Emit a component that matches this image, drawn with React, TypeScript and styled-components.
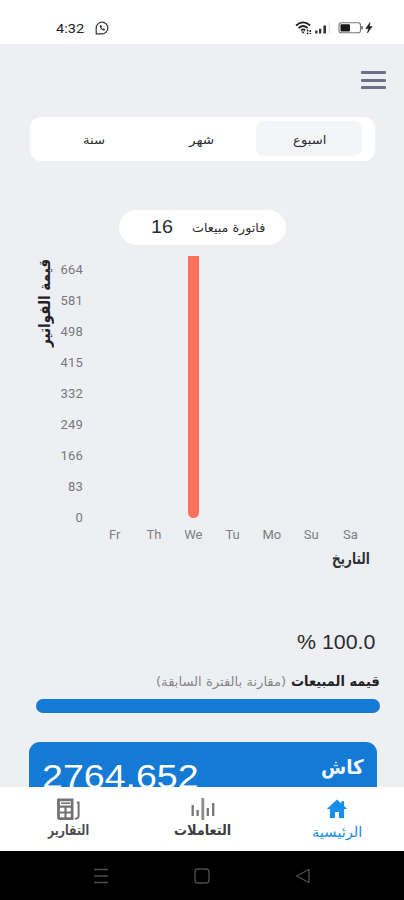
import React, { useLayoutEffect, useRef, useState } from 'react';
import styled, { createGlobalStyle } from 'styled-components';

const GlobalStyle = createGlobalStyle`
  * { box-sizing: border-box; }
  body { margin: 0; background: #edeff3; font-family: Roboto, 'DejaVu Sans', sans-serif; }
`;

const Screen = styled.div`
  width: 404px;
  height: 900px;
  display: flex;
  flex-direction: column;
  background: #edeff3;
  overflow: hidden;
`;

/* Text that is stretched to fill an exact width */
const FitBox = styled.span<{ $w: number; $lh: number }>`
  display: block;
  flex: none;
  direction: ltr;
  text-align: left;
  width: ${(p) => p.$w}px;
  height: ${(p) => p.$lh}px;
  line-height: ${(p) => p.$lh}px;
`;
const FitInner = styled.span<{ $size: number; $color: string; $weight: number; $font: string }>`
  display: inline-block;
  white-space: pre;
  transform-origin: 0 50%;
  font-family: ${(p) => p.$font};
  font-size: ${(p) => p.$size}px;
  font-weight: ${(p) => p.$weight};
  color: ${(p) => p.$color};
`;

type FitProps = {
  children: string;
  width: number;
  size: number;
  color?: string;
  weight?: number;
  font?: string;
  line?: number;
  dir?: 'rtl' | 'ltr';
};

function Fit({
  children,
  width,
  size,
  color = '#2b2b2f',
  weight = 400,
  font = "'DejaVu Sans', sans-serif",
  line = 20,
  dir = 'rtl',
}: FitProps) {
  const ref = useRef<HTMLSpanElement>(null);
  const [scale, setScale] = useState(1);
  useLayoutEffect(() => {
    if (ref.current) setScale(width / ref.current.offsetWidth);
  }, [width, children]);
  return (
    <FitBox $w={width} $lh={line}>
      <FitInner
        ref={ref}
        dir={dir}
        $size={size}
        $color={color}
        $weight={weight}
        $font={font}
        style={{ transform: `scaleX(${scale})` }}
      >
        {children}
      </FitInner>
    </FitBox>
  );
}

const LATIN = "'Liberation Sans', Arial, sans-serif";

const StatusBar = styled.header`
  height: 44px;
  flex: none;
  background: #fff;
  display: flex;
  justify-content: space-between;
  padding: 18px 30px 0 56px;
`;
const StatusGroup = styled.div<{ $gap: number }>`
  display: flex;
  height: 20px;
  align-items: center;
  gap: ${(p) => p.$gap}px;
`;

const Content = styled.main`
  height: 743px;
  flex: none;
  overflow: hidden;
  display: flex;
  flex-direction: column;
`;
const MenuButton = styled.button`
  align-self: flex-end;
  flex: none;
  margin: 27px 18px 0 0;
  width: 25px;
  height: 18px;
  padding: 0;
  border: 0;
  background: none;
  display: flex;
  flex-direction: column;
  justify-content: space-between;
`;
const MenuLine = styled.span`
  height: 3px;
  border-radius: 1px;
  background: #6b7189;
`;

const Segments = styled.div`
  flex: none;
  margin: 28px 29px 0 30px;
  height: 44px;
  padding: 4px 13px 5px 10px;
  border-radius: 11px;
  background: #fff;
  display: grid;
  grid-template-columns: 107px 109px 106px;
`;
const Segment = styled.div<{ $active?: boolean }>`
  display: flex;
  align-items: center;
  justify-content: center;
  border-radius: 8px;
  background: ${(p) => (p.$active ? '#f4f5f7' : 'transparent')};
`;

const InvoicePill = styled.div`
  flex: none;
  margin: 49px 0 0 119px;
  width: 167px;
  height: 35px;
  border-radius: 18px;
  background: #fff;
  display: flex;
  align-items: center;
  padding: 0 0 2px 32px;
  gap: 19px;
`;

const Chart = styled.section`
  flex: none;
  margin-top: 11px;
  height: 289px;
  display: grid;
  grid-template-columns: 35px 48px 12px 275px;
  grid-template-rows: 262px 27px;
`;
const AxisTitle = styled.div`
  display: flex;
  align-items: flex-start;
  justify-content: flex-end;
`;
const Turned = styled.div`
  width: 20px;
  height: 88px;
  margin: 3px -20px 0 0;
  display: flex;
  align-items: center;
  justify-content: center;
  flex: none;
  & > span { transform: rotate(-90deg); }
`;
const Ticks = styled.div`
  display: flex;
  flex-direction: column;
  text-align: right;
  font-size: 13px;
  letter-spacing: 0.2px;
  color: #77797e;
`;
const Tick = styled.div`
  height: 31px;
  line-height: 27px;
  flex: none;
`;
const Plot = styled.div`
  grid-column: 4;
  display: grid;
  grid-template-columns: repeat(7, 39.3px);
`;
const Slot = styled.div`
  display: flex;
  align-items: flex-end;
  justify-content: center;
`;
const Bar = styled.div`
  width: 11px;
  height: 100%;
  border-radius: 0 0 6px 6px;
  background: #ff6f5b;
`;
const Day = styled.div`
  text-align: center;
  font-size: 13px;
  line-height: 34px;
  color: #7d7f84;
`;
const DateTitle = styled.div`
  flex: none;
  height: 24px;
  margin: 2px 34px 0 0;
  display: flex;
  align-items: center;
  justify-content: flex-end;
`;

const Percent = styled.div`
  flex: none;
  margin: 58px 29px 0 0;
  height: 26px;
  display: flex;
  justify-content: flex-end;
`;
const Comparison = styled.div`
  flex: none;
  margin: 14px 24px 0 0;
  height: 24px;
  display: flex;
  justify-content: flex-end;
  gap: 5px;
`;
const Progress = styled.div`
  flex: none;
  margin: 6px 24px 0 36px;
  height: 14px;
  border-radius: 7px;
  background: #1579d6;
`;
const CashCard = styled.section`
  flex: none;
  margin: 29px 27px 0 29px;
  height: 110px;
  border-radius: 11px;
  background: #1579d6;
  display: flex;
  justify-content: space-between;
  padding: 10px 13px 0 13px;
`;
const CashAmount = styled.div`
  padding-top: 6px;
`;

const TabBar = styled.nav`
  height: 64px;
  flex: none;
  background: #fff;
  display: grid;
  grid-template-columns: 136px 133px 135px;
`;
const Tab = styled.div<{ $drop?: number }>`
  display: flex;
  flex-direction: column;
  align-items: center;
  padding-top: 11px;
  gap: ${(p) => p.$drop ?? 0}px;
  & > svg { flex: none; }
`;
const SystemBar = styled.footer`
  height: 49px;
  flex: none;
  background: #000;
  display: grid;
  grid-template-columns: repeat(3, 101px);
  justify-content: center;
  justify-items: center;
  align-items: center;
`;

const WhatsApp = () => (
  <svg width="14" height="14" viewBox="0 0 14 14" fill="none" stroke="#333" strokeWidth="1.2">
    <path d="M1.2 12.8V6.9a5.8 5.8 0 1 1 5.8 5.9H1.2Z" />
    <path d="M4.7 4.2c-.5 2.5 2.2 5.4 4.9 5.3l.5-1.3-1.6-.8-.7.6-1.5-1.6.6-.7-.7-1.5Z" fill="#333" stroke="none" />
  </svg>
);
const Wifi = () => (
  <svg width="20" height="14" viewBox="0 0 20 14" fill="none" stroke="#222" strokeWidth="1.7">
    <path d="M1 4.5Q8.2-1.6 15.2 4.5M3.6 7Q8.2 3 12.6 7M6 9.3Q8.2 7.6 10.2 9.3" />
    <path d="m6.3 10.6 1.8 2.2 1.8-2.2Z" fill="#333" stroke="none" />
    <path d="M12.6 8.6v4.6M15.3 9v4" strokeWidth="1.5" strokeDasharray="2 1" />
  </svg>
);
const Signal = () => (
  <svg width="16" height="14" viewBox="0 0 16 14">
    <path d="M.2 9.5h2.3V12.4H.2zM4 7.8h2.3v4.6H4zM8.4 4.4h2.6v8H8.4z" fill="#333" />
    <path d="M13.7 1.5h1V12h-1z" fill="#ddd" />
  </svg>
);
const Battery = () => (
  <svg width="36" height="14" viewBox="0 0 36 14">
    <rect x="1" y="1.8" width="21.5" height="10" rx="2.4" fill="none" stroke="#777" strokeWidth="1.1" />
    <rect x="2.5" y="3.2" width="9.5" height="7.3" rx="1" fill="#181818" />
    <path d="M24 5v3.6" stroke="#666" strokeWidth="1.5" />
    <path d="M32 1.5 27.8 7.6h2.7L29.5 12l4.6-6.5h-2.8Z" fill="#222" stroke="#222" strokeWidth=".6" />
  </svg>
);
const Report = () => (
  <svg width="23" height="22" viewBox="0 0 23 22" fill="none" stroke="#737373">
    <path d="M1.5 1.8h13.6v18.8H3.2q-1.7 0-1.7-1.7Z" strokeWidth="2.8" />
    <path d="M1.5 8.6h13M8.5 8.6v12M2.5 14.5H14" strokeWidth="2.2" />
    <path d="M4 5.2h9" strokeWidth="1.6" />
    <path d="M19.8 4.4h1.8v13.4q0 3-3.8 3" strokeWidth="2" />
  </svg>
);
const Waves = () => (
  <svg width="24" height="22" viewBox="0 0 24 22" fill="none" stroke="#777" strokeWidth="2.3">
    <path d="M1.7 7v11M6.6 12v6M16.8 10v8M22.2 5v13" />
    <path d="M11.8 0v22" stroke="#8b8b8b" strokeWidth="2.8" />
  </svg>
);
const House = () => (
  <svg width="22" height="22" viewBox="0 0 22 22" fill="#168eea">
    <path d="M11 1.4.8 11.1h3.1V20h5.2v-6.1h3.8V20h5.2v-8.9h3.1L18 8V3.2h-2.8v2.2Z" />
  </svg>
);

const TICKS = ['664', '581', '498', '415', '332', '249', '166', '83', '0'];
const DAYS = ['Fr', 'Th', 'We', 'Tu', 'Mo', 'Su', 'Sa'];

export default function App() {
  return (
    <Screen>
      <GlobalStyle />
      <StatusBar>
        <StatusGroup $gap={11}>
          <Fit width={28} size={13} dir="ltr" font="Roboto, sans-serif" color="#222">4:32</Fit>
          <WhatsApp />
        </StatusGroup>
        <StatusGroup $gap={7}>
          <StatusGroup $gap={0}>
            <Wifi />
            <Signal />
          </StatusGroup>
          <Battery />
        </StatusGroup>
      </StatusBar>

      <Content>
        <MenuButton aria-label="menu">
          <MenuLine />
          <MenuLine />
          <MenuLine />
        </MenuButton>

        <Segments>
          <Segment><Fit width={22} size={12}>سنة</Fit></Segment>
          <Segment><Fit width={25} size={12}>شهر</Fit></Segment>
          <Segment $active><Fit width={33} size={12}>اسبوع</Fit></Segment>
        </Segments>

        <InvoicePill>
          <Fit width={22} size={18} dir="ltr" font={LATIN}>16</Fit>
          <Fit width={73} size={12}>فاتورة مبيعات</Fit>
        </InvoicePill>

        <Chart>
          <AxisTitle>
            <Turned>
              <Fit width={88} size={16} weight={700} color="#222228">قيمة الفواتير</Fit>
            </Turned>
          </AxisTitle>
          <Ticks>
            {TICKS.map((t) => <Tick key={t}>{t}</Tick>)}
          </Ticks>
          <Plot>
            {DAYS.map((d) => <Slot key={d}>{d === 'We' && <Bar />}</Slot>)}
          </Plot>
          <Plot>
            {DAYS.map((d) => <Day key={d}>{d}</Day>)}
          </Plot>
        </Chart>
        <DateTitle>
          <Fit width={38} size={16} weight={700} color="#303036">التاريخ</Fit>
        </DateTitle>

        <Percent>
          <Fit width={78} size={20} line={26} dir="ltr" font={LATIN}>% 100.0</Fit>
        </Percent>
        <Comparison>
          <Fit width={130} size={12.5} line={24} color="#85878c">(مقارنة بالفترة السابقة)</Fit>
          <Fit width={89} size={14} line={24} weight={700} color="#222228">قيمه المبيعات</Fit>
        </Comparison>
        <Progress />

        <CashCard>
          <CashAmount>
            <Fit width={157} size={33} line={38} dir="ltr" font={LATIN} color="#fff">2764.652</Fit>
          </CashAmount>
          <Fit width={43} size={20} line={30} weight={700} color="#f2f8ff">كاش</Fit>
        </CashCard>
      </Content>

      <TabBar>
        <Tab>
          <Report />
          <Fit width={41} size={14} weight={700} color="#4b4b50">التقارير</Fit>
        </Tab>
        <Tab>
          <Waves />
          <Fit width={57} size={14} weight={700} color="#3b3b40">التعاملات</Fit>
        </Tab>
        <Tab $drop={2}>
          <House />
          <Fit width={50} size={14} color="#168eea">الرئيسية</Fit>
        </Tab>
      </TabBar>
      <SystemBar>
        <svg width="16" height="16" viewBox="0 0 16 16" stroke="#4b4b4b" strokeWidth="1.4">
          <path d="M1 1.5h14M1 8h14M1 14.5h14" />
        </svg>
        <svg width="16" height="16" viewBox="0 0 16 16" fill="none" stroke="#4b4b4b" strokeWidth="1.4">
          <rect x="1" y="1" width="14" height="14" rx="3" />
        </svg>
        <svg width="16" height="16" viewBox="0 0 16 16" fill="none" stroke="#4b4b4b" strokeWidth="1.4">
          <path d="M14 1.5v13L1.6 8Z" strokeLinejoin="round" />
        </svg>
      </SystemBar>
    </Screen>
  );
}
